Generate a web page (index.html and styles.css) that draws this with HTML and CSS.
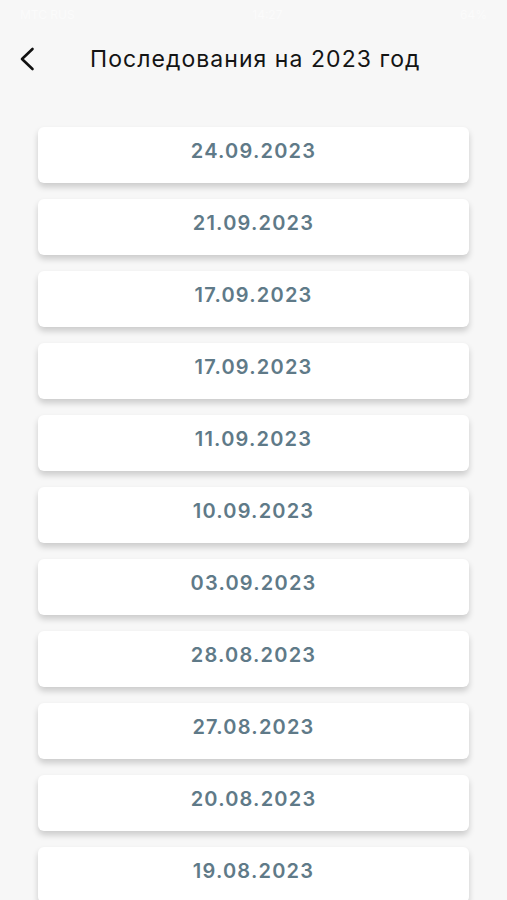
FILE: index.html
```html
<!DOCTYPE html>
<html lang="ru">
<head>
  <meta charset="UTF-8">
  <meta name="viewport" content="width=device-width, initial-scale=1.0">
  <title>Последования на 2023 год</title>
  <link rel="stylesheet" href="styles.css">
</head>
<body>
  <div class="status-bar">
    <span>МТС RUS</span>
    <span>14:27</span>
    <span>64%</span>
  </div>
  <header class="top-bar">
    <button class="back-button" aria-label="Назад">
      <svg width="16" height="24" viewBox="0 0 16 24">
        <path d="M13.5 2 L3 12 L13.5 22" fill="none" stroke="#111" stroke-width="2.6" stroke-linecap="round" stroke-linejoin="round"/>
      </svg>
    </button>
    <h1>Последования на 2023 год</h1>
  </header>
  <main class="date-list">
    <div class="date-card">24.09.2023</div>
    <div class="date-card">21.09.2023</div>
    <div class="date-card">17.09.2023</div>
    <div class="date-card">17.09.2023</div>
    <div class="date-card">11.09.2023</div>
    <div class="date-card">10.09.2023</div>
    <div class="date-card">03.09.2023</div>
    <div class="date-card">28.08.2023</div>
    <div class="date-card">27.08.2023</div>
    <div class="date-card">20.08.2023</div>
    <div class="date-card">19.08.2023</div>
  </main>
</body>
</html>
```

FILE: styles.css
```css
body {
    margin: 0;
    background-color: #f7f7f7;
    font-family: Inter, "Noto Sans", sans-serif;
    overflow: hidden;
}
.status-bar {
    height: 28px;
    display: flex;
    justify-content: space-between;
    align-items: center;
    padding: 0 20px;
    font-size: 12px;
    color: #fbfbfb;
}
.top-bar {
    height: 62px;
    display: flex;
    align-items: center;
    padding-left: 19px;
}
.back-button {
    background: none;
    border: none;
    padding: 0;
    width: 22px;
    height: 30px;
    display: flex;
    align-items: center;
    cursor: pointer;
}
.top-bar h1 {
    margin: 0 0 0 49px;
    font-size: 23px;
    font-weight: 400;
    color: #141414;
    letter-spacing: 1.05px;
}
.date-list {
    display: flex;
    flex-direction: column;
    gap: 16px;
    padding: 37px 38px 0 38px;
}
.date-card {
    height: 56px;
    flex-shrink: 0;
    display: flex;
    align-items: center;
    justify-content: center;
    background-color: #fff;
    border-radius: 6px;
    box-shadow: 0 4px 6px rgba(0, 0, 0, 0.18);
    font-size: 20px;
    font-weight: 600;
    color: #5f7a88;
    letter-spacing: 1.2px;
    padding-bottom: 9px;
    box-sizing: border-box;
}
```
